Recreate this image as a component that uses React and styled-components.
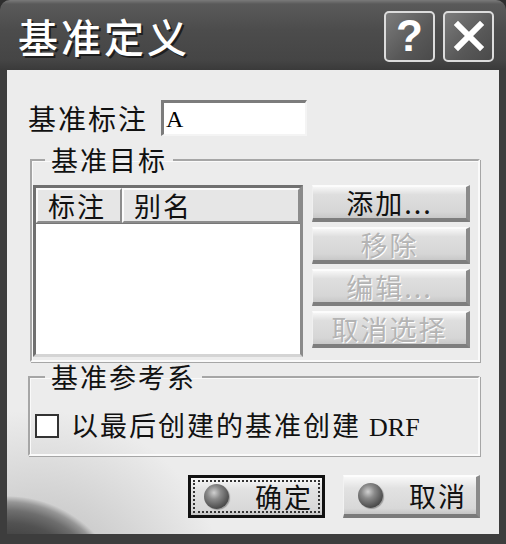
import React from "react";
import styled, { createGlobalStyle, css } from "styled-components";

const Global = createGlobalStyle`
  html, body { margin: 0; padding: 0; background: #2e2e2e; }
  body { font-family: "Noto Sans CJK SC", "Liberation Sans", sans-serif; }
`;

const cjk = `"Noto Sans CJK SC", "Liberation Sans", sans-serif`;

const Frame = styled.div`
  width: 506px;
  height: 544px;
  box-sizing: border-box;
  display: flex;
  flex-direction: column;
  background: #3d3d3d;
  border-radius: 10px 10px 0 0;
  overflow: hidden;
`;

const TitleBar = styled.div`
  height: 70px;
  flex: 0 0 70px;
  display: flex;
  align-items: center;
  justify-content: space-between;
  padding: 0 12px 4px 18px;
  box-sizing: border-box;
  background: linear-gradient(#7a7a7a 0px, #5a5a5a 4px, #4c4c4c 30px, #454545 60px, #3a3a3a 70px);
`;

const Title = styled.div`
  font-family: ${cjk};
  font-size: 40px;
  font-weight: 500;
  letter-spacing: 3px;
  color: #fff;
  text-shadow: 2px 2px 0 #1e1e1e;
  line-height: 1;
  margin-top: 5px;
`;

const TitleButtons = styled.div`
  display: flex;
  gap: 8px;
  margin-top: 6px;
`;

const CapButton = styled.div`
  width: 51px;
  height: 51px;
  box-sizing: border-box;
  border: 2px solid #dcdcdc;
  border-radius: 5px;
  background: linear-gradient(135deg, #7c7c7c, #585858 60%, #4a4a4a);
  display: flex;
  align-items: center;
  justify-content: center;
  color: #fff;
  font-family: "Liberation Sans", sans-serif;
  font-weight: 700;
  font-size: 44px;
  line-height: 1;
`;

const Body = styled.div`
  flex: 1;
  margin: 0 7px 10px 7px;
  padding: 30px 19px 16px 21px;
  display: flex;
  flex-direction: column;
  background:
    radial-gradient(circle 122px at 0px 548px, #333 0%, #3e3e3e 62%, #525252 78%, #6e6e6e 88%, #969696 95%, #c4c4c4 99%, rgba(236,236,236,0) 100%),
    radial-gradient(circle 190px at 30px 530px, rgba(165,165,165,0.8), rgba(236,236,236,0) 100%),
    #ececec;
  background-repeat: no-repeat;
`;

const Text = styled.span`
  font-family: ${cjk};
  font-size: 27px;
  letter-spacing: 2px;
  line-height: 1.1;
  color: ${({ $disabled }) => ($disabled ? "#b4b4b4" : "#111")};
  ${({ $disabled }) => $disabled && css`text-shadow: 1px 1px 0 #fff;`}
  white-space: nowrap;
`;

const Latin = styled.span`
  font-family: "Liberation Serif", serif;
  letter-spacing: 0;
  font-size: 26px;
`;

const FieldRow = styled.div`
  display: flex;
  align-items: center;
  gap: 13px;
`;

const Label = styled(Text)`
  font-size: 28px;
  line-height: 32px;
`;

const Input = styled.div`
  width: 146px;
  height: 36px;
  box-sizing: border-box;
  background: #fff;
  border-top: 3px solid #7c7c7c;
  border-left: 3px solid #7c7c7c;
  border-right: 2px solid #f4f4f4;
  border-bottom: 2px solid #f4f4f4;
  display: flex;
  align-items: flex-end;
  padding: 0 0 3px 2px;
  font-family: "Liberation Serif", serif;
  font-size: 24px;
  line-height: 1;
  color: #000;
`;

const Group = styled.fieldset`
  margin: ${({ $top }) => $top}px 0 0 ${({ $left }) => $left}px;
  padding: ${({ $pad }) => $pad};
  border: 2px solid #a6a6a6;
  border-right-color: #fafafa;
  border-bottom-color: #fafafa;
  box-shadow: inset 1px 1px 0 #fafafa, 1px 1px 0 #a6a6a6;
  min-width: 0;
`;

const Legend = styled.legend`
  margin-left: 12px;
  padding: 0 6px;
  font-family: ${cjk};
  font-size: 27px;
  letter-spacing: 2px;
  line-height: 30px;
  color: #111;
`;

const TargetArea = styled.div`
  display: flex;
  gap: 9px;
  align-items: flex-start;
`;

const Table = styled.div`
  width: 270px;
  height: 172px;
  box-sizing: border-box;
  background: #fff;
  border: 3px solid #707070;
  border-bottom-color: #d4d4d4;
  border-right-color: #8a8a8a;
`;

const HeaderRow = styled.div`
  display: flex;
  height: 35px;
  background: #7a7a7a;
  border-bottom: 1px solid #777;
`;

const HeaderCell = styled.div`
  width: ${({ $w }) => $w};
  flex: ${({ $grow }) => ($grow ? 1 : "none")};
  box-sizing: border-box;
  background: #e6e6e6;
  border-top: 2px solid #fbfbfb;
  border-left: 2px solid #fbfbfb;
  border-right: 2px solid #8c8c8c;
  border-bottom: 2px solid #8c8c8c;
  display: flex;
  align-items: center;
  padding-left: 10px;
`;

const ButtonColumn = styled.div`
  display: flex;
  flex-direction: column;
  gap: 5px;
`;

const PushButton = styled.div`
  width: 158px;
  height: 37px;
  box-sizing: border-box;
  display: flex;
  align-items: center;
  justify-content: center;
  background: linear-gradient(#f6f6f6 0%, #dedede 25%, #d6d6d6 80%, #c8c8c8 100%);
  border-top: 2px solid #fcfcfc;
  border-left: 1px solid #f0f0f0;
  border-right: 4px solid #8a8a8a;
  border-bottom: 4px solid #7e7e7e;
`;

const CheckRow = styled.label`
  display: flex;
  align-items: center;
  gap: 12px;
  padding: 14px 0 0 2px;
`;

const CheckBox = styled.span`
  width: 24px;
  height: 24px;
  box-sizing: border-box;
  border: 2px solid #333;
  background: #fff;
`;

const Footer = styled.div`
  margin-top: auto;
  display: flex;
  justify-content: flex-end;
  gap: 18px;
`;

const DialogButton = styled.div`
  width: 137px;
  height: 43px;
  box-sizing: border-box;
  display: flex;
  align-items: center;
  gap: 26px;
  padding-left: ${({ $default }) => ($default ? "13px" : "14px")};
  background: linear-gradient(#f8f8f8 0%, #e2e2e2 30%, #d8d8d8 85%, #c4c4c4 100%);
  ${({ $default }) =>
    $default
      ? css`
          border: 3px solid #111;
          outline: 2px dotted #333;
          outline-offset: -7px;
        `
      : css`
          border-top: 2px solid #fdfdfd;
          border-left: 1px solid #f2f2f2;
          border-right: 4px solid #8a8a8a;
          border-bottom: 4px solid #7a7a7a;
        `}
`;

const Sphere = styled.span`
  width: 25px;
  height: 25px;
  border-radius: 50%;
  background: radial-gradient(circle at 40% 35%, #d0d0d0 0%, #8a8a8a 30%, #4e4e4e 70%, #2e2e2e 100%);
  box-shadow: 1px 1px 1px rgba(0,0,0,0.3);
`;

function CloseGlyph() {
  return (
    <svg width="32" height="32" viewBox="0 0 32 32">
      <path d="M5 5 L27 27 M27 5 L5 27" stroke="#fff" strokeWidth="6" strokeLinecap="square" />
    </svg>
  );
}

export default function App() {
  return (
    <>
      <Global />
      <Frame>
        <TitleBar>
          <Title>基准定义</Title>
          <TitleButtons>
            <CapButton>?</CapButton>
            <CapButton><CloseGlyph /></CapButton>
          </TitleButtons>
        </TitleBar>
        <Body>
          <FieldRow>
            <Label>基准标注</Label>
            <Input>A</Input>
          </FieldRow>

          <Group $top={9} $left={2} $pad="10px 8px 3px 1px">
            <Legend>基准目标</Legend>
            <TargetArea>
              <Table>
                <HeaderRow>
                  <HeaderCell $w="86px"><Text>标注</Text></HeaderCell>
                  <HeaderCell $grow><Text>别名</Text></HeaderCell>
                </HeaderRow>
              </Table>
              <ButtonColumn>
                <PushButton><Text>添加...</Text></PushButton>
                <PushButton><Text $disabled>移除</Text></PushButton>
                <PushButton><Text $disabled>编辑...</Text></PushButton>
                <PushButton><Text $disabled>取消选择</Text></PushButton>
              </ButtonColumn>
            </TargetArea>
          </Group>

          <Group $top={0} $left={0} $pad="4px 8px 11px 3px">
            <Legend>基准参考系</Legend>
            <CheckRow>
              <CheckBox />
              <Text>以最后创建的基准创建 <Latin>DRF</Latin></Text>
            </CheckRow>
          </Group>

          <Footer>
            <DialogButton $default><Sphere /><Text>确定</Text></DialogButton>
            <DialogButton><Sphere /><Text>取消</Text></DialogButton>
          </Footer>
        </Body>
      </Frame>
    </>
  );
}
